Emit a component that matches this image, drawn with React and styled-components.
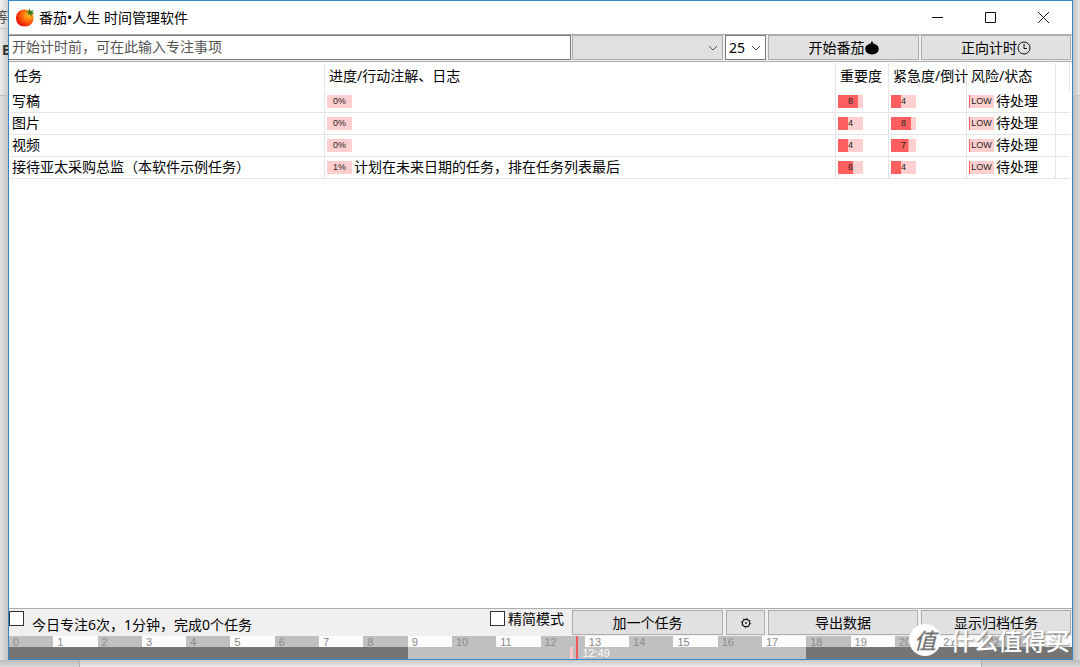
import React from "react";
import styled, { createGlobalStyle } from "styled-components";

const GlobalStyle = createGlobalStyle`
  * { box-sizing: border-box; }
  html, body, #root { height: 100%; }
  body {
    margin: 0;
    overflow: hidden;
    background: #e6e6e6;
    color: #000;
    font: 14px/20px "Noto Sans", "Noto Sans CJK SC", sans-serif;
  }
  button, input, select { font: inherit; color: inherit; margin: 0; }
`;

const Desktop = styled.div`
  height: 100%;
  display: grid;
  grid-template-columns: 8px minmax(0, 1fr) 7px;
  grid-template-rows: minmax(0, 1fr) 7px;
`;

const LeftStrip = styled.div`
  overflow: hidden;
  background: linear-gradient(to right, #e2e2e2, #c4c4c4);
`;

const BackTab = styled.div`
  height: 29px;
  padding-top: 7px;
  border-bottom: 1px solid #c4c4c4;
  background: linear-gradient(to right, #f2f2f2, #cfcfcf);
  color: #555;
  text-indent: -6px;
  white-space: nowrap;
`;

const BackTools = styled.div`
  height: 67px;
  padding-top: 11px;
  border-bottom: 1px solid #c0c0c0;
  background: linear-gradient(to right, #ececec, #cccccc);
  color: #333;
  font-weight: 700;
  text-indent: 2px;
`;

const RightStrip = styled.div`
  background: linear-gradient(to right, #bcbcbc, #dadada);
`;

const RightTop = styled.div`
  height: 96px;
  border-bottom: 1px solid #c4c4c4;
  background: linear-gradient(to right, #c4c4c4, #e6e6e6);
`;

const BottomStrip = styled.div`
  grid-column: 1 / -1;
  display: grid;
  grid-template-columns: 79px minmax(0, 1fr) 98px;
  background: linear-gradient(#bcbcbc, #d8d8d8);
`;

const BackPage = styled.div`
  grid-column: 2;
  border: solid #b4b4b4;
  border-width: 0 1px;
  background: linear-gradient(#c8c8c8, #eeebea);
`;

const Window = styled.main`
  display: flex;
  flex-direction: column;
  min-width: 0;
  border: 1px solid #2f87d0;
  background: #fff;
`;

const TitleBar = styled.header`
  display: flex;
  align-items: center;
  height: 33px;
  padding: 0 21px 0 6px;
`;

const Title = styled.h1`
  flex: 1;
  margin: 0 0 0 4px;
  font-size: 14px;
  font-weight: 400;
`;

const WindowButtons = styled.div`
  display: flex;
  gap: 37px;
`;

const WindowButton = styled.button`
  display: flex;
  width: 16px;
  height: 16px;
  padding: 0;
  border: 0;
  background: none;
`;

const Toolbar = styled.div`
  display: grid;
  grid-template-columns: minmax(0, 1fr) 151px 41px 151px 150px;
  column-gap: 2px;
  height: 28px;
  padding: 0 1px 1px 0;
  border: solid #adadad;
  border-width: 1px 0;
  background: #f0f0f0;
`;

const FocusInput = styled.input`
  min-width: 0;
  height: 25px;
  margin-right: -1px;
  padding: 0 3px 2px;
  border: 1px solid #7a7a7a;
  border-left-width: 0;
  border-radius: 0;
  outline: 0;
  background: #fff;
  &::placeholder { color: #555; opacity: 1; }
`;

const SelectBox = styled.div`
  display: grid;
  align-items: center;
  height: 25px;
  border: 1px solid ${(p) => (p.$muted ? "#adadad" : "#7a7a7a")};
  background: ${(p) => (p.$muted ? "#e0e0e0" : "#fff")};
  > * { grid-area: 1 / 1; }
  > svg { justify-self: end; margin-right: 4px; pointer-events: none; }
`;

const Select = styled.select`
  width: 100%;
  height: 23px;
  padding: 0 3px;
  border: 0;
  outline: 0;
  appearance: none;
  background: transparent;
`;

const Button = styled.button`
  display: flex;
  align-items: center;
  justify-content: center;
  height: 25px;
  min-width: 0;
  padding: 0;
  border: 1px solid #adadad;
  background: #e1e1e1;
  white-space: nowrap;
`;

const ListArea = styled.section`
  flex: 1;
  min-height: 0;
  padding: 1px 2px 0 1px;
`;

const Table = styled.table`
  width: 100%;
  border-collapse: separate;
  border-spacing: 0;
  table-layout: fixed;
`;

const Col = styled.col`
  width: ${(p) => (p.$width ? `${p.$width}px` : "auto")};
`;

const Th = styled.th`
  height: 28px;
  padding: 0 0 3px 4px;
  border-right: 1px solid #e5e5e5;
  font-weight: 400;
  text-align: left;
  white-space: nowrap;
`;

const Td = styled.td`
  height: 22px;
  padding: 0 0 1px 2px;
  border: solid #e5e5e5;
  border-width: 0 1px 1px 0;
  white-space: nowrap;
  &:last-child { border-right: 0; }
`;

const Cell = styled.div`
  display: flex;
  align-items: center;
  gap: 2px;
  height: 20px;
`;

const Meter = styled.span`
  width: 25px;
  height: 13px;
  background: linear-gradient(#ff5f5f, #ff5f5f) 0 0 / ${(p) => p.$fill}% 100% no-repeat #ffcfcf;
  color: #222;
  font: 9px/13px "Liberation Sans", Arial, sans-serif;
  text-align: center;
`;

const Footer = styled.footer`
  display: grid;
  grid-template-columns: minmax(0, 1fr) 79px 151px 39px 150px 150px;
  column-gap: 3px;
  height: 28px;
  padding: 1px 1px 0 0;
  border-top: 1px solid #adadad;
  background: #f0f0f0;
`;

const CheckLabel = styled.label`
  display: flex;
  align-items: ${(p) => (p.$low ? "flex-end" : "flex-start")};
  gap: ${(p) => (p.$low ? 8 : 3)}px;
  padding-bottom: 2px;
  white-space: nowrap;
  line-height: 18px;
`;

const Check = styled.input`
  appearance: none;
  align-self: flex-start;
  width: 15px;
  height: 15px;
  margin: 1px 0 0;
  border: 1px solid #333;
  background: #fff;
`;

const Timeline = styled.section`
  position: relative;
  color: #8a8a8a;
  font: 11px/11px "Liberation Sans", Arial, sans-serif;
`;

const Hours = styled.div`
  display: grid;
  grid-template-columns: repeat(24, minmax(0, 1fr));
  height: 11px;
`;

const Hour = styled.span`
  padding: 1px 0 0 4px;
  overflow: hidden;
  background: ${(p) => (p.$odd ? "#fcfcfc" : "#c0c0c0")};
`;

const Band = styled.div`
  display: grid;
  grid-template-columns: 9fr 9fr 6fr;
  height: 12px;
  background: #757575;
`;

const WorkHours = styled.div`
  grid-column: 2;
  background: #c0c0c0;
`;

const Session = styled.span`
  position: absolute;
  left: calc(53% - 2px);
  bottom: 0;
  width: 3px;
  height: 12px;
  background: #ffc8c8;
`;

const Now = styled.time`
  position: absolute;
  left: calc(53% + 4px);
  bottom: 0;
  height: 23px;
  padding: 12px 0 0 4px;
  border-left: 2px solid #f25a5a;
  color: #fff;
`;

const Watermark = styled.div`
  position: absolute;
  right: 10px;
  bottom: 11px;
  display: flex;
  align-items: center;
  gap: 9px;
  color: #fff;
  font: 500 24px/32px "Noto Sans CJK SC", sans-serif;
  text-shadow: 1px 1px 2px #777;
  pointer-events: none;
`;

const Seal = styled.span`
  width: 32px;
  height: 32px;
  border-radius: 50%;
  background: #fff;
  color: #777;
  font-size: 22px;
  line-height: 30px;
  text-align: center;
  text-shadow: none;
  > i { display: block; }
`;

const Chevron = () => (
  <svg width="10" height="8" viewBox="0 0 10 8" fill="none" stroke="#555">
    <path d="M1 2l4 4 4-4" />
  </svg>
);

const Tomato = () => (
  <svg width="20" height="20" viewBox="0 0 20 20" aria-hidden="true">
    <defs>
      <radialGradient id="skin" cx="0.72" cy="0.32" r="0.75">
        <stop offset="0" stopColor="#ffc21a" />
        <stop offset="0.5" stopColor="#ff6a10" />
        <stop offset="1" stopColor="#f01208" />
      </radialGradient>
    </defs>
    <path d="M9.500 1.500C4.500 1.500 1 5 1 10c0 5 3.600 8.500 8.700 8.500S18.500 15 18.500 10C18.500 5 14.800 1.500 9.500 1.500z" fill="url(#skin)" />
    <path d="M10.500 3l3.200.4.600-2.900 1.400 2.500 3.300-.8-1.700 2.100 1.900 2-2.600-.5.200 2.700-2-2.200-2.100 1.200.7-2.400z" fill="#3f7a1c" />
  </svg>
);

const BlackTomato = () => (
  <svg width="14" height="14" viewBox="0 0 14 14" aria-hidden="true">
    <path d="M7 4.200C8.500 3 13.700 3 13.700 8c0 3.400-2.900 5.400-6.700 5.400S.3 11.400.3 8C.3 3 5.500 3 7 4.200z" />
    <path d="M2.800 3l3-.4L6.400.4h1.300l.2 2.200 3.300.4-2.500 1L7 5.200 5.500 4z" />
  </svg>
);

const Clock = () => (
  <svg width="14" height="14" viewBox="0 0 14 14" fill="none" stroke="#111" aria-hidden="true">
    <circle cx="7" cy="7" r="6" />
    <path d="M7 3v4.500h3" />
  </svg>
);

const Gear = () => (
  <svg width="12" height="12" viewBox="0 0 12 12" fill="none" stroke="#111" aria-hidden="true">
    <circle cx="6" cy="6" r="3.700" strokeWidth="1.200" />
    <circle cx="6" cy="6" r="4.700" strokeDasharray="1 2.690" />
    <circle cx="6" cy="6" r="0.900" fill="#111" stroke="none" />
  </svg>
);

const tasks = [
  { name: "写稿", progress: 0, note: "", importance: 8, urgency: 4 },
  { name: "图片", progress: 0, note: "", importance: 4, urgency: 8 },
  { name: "视频", progress: 0, note: "", importance: 4, urgency: 7 },
  { name: "接待亚太采购总监（本软件示例任务）", progress: 1, note: "计划在未来日期的任务，排在任务列表最后", importance: 6, urgency: 4 },
];

const hours = Array.from({ length: 24 }, (_, i) => i);

export default function App() {
  return (
    <>
      <GlobalStyle />
      <Desktop>
        <LeftStrip aria-hidden="true">
          <BackTab>等</BackTab>
          <BackTools>B</BackTools>
        </LeftStrip>
        <Window>
          <TitleBar>
            <Tomato />
            <Title>番茄•人生 时间管理软件</Title>
            <WindowButtons>
              <WindowButton aria-label="最小化">
                <svg width="16" height="16" stroke="#111"><path d="M3 7.500h11" /></svg>
              </WindowButton>
              <WindowButton aria-label="最大化">
                <svg width="16" height="16" fill="none" stroke="#111"><path d="M3.500 2.500h10v10h-10z" /></svg>
              </WindowButton>
              <WindowButton aria-label="关闭">
                <svg width="16" height="16" stroke="#111"><path d="M3 2l11 11M14 2L3 13" /></svg>
              </WindowButton>
            </WindowButtons>
          </TitleBar>
          <Toolbar>
            <FocusInput aria-label="专注事项" placeholder="开始计时前，可在此输入专注事项" />
            <SelectBox $muted>
              <Select aria-label="任务" />
              <Chevron />
            </SelectBox>
            <SelectBox>
              <Select aria-label="分钟" defaultValue="25">
                <option>25</option>
              </Select>
              <Chevron />
            </SelectBox>
            <Button>开始番茄<BlackTomato /></Button>
            <Button>正向计时<Clock /></Button>
          </Toolbar>
          <ListArea>
            <Table>
              <colgroup>
                <Col $width={315} />
                <Col />
                <Col $width={53} />
                <Col $width={78} />
                <Col $width={89} />
                <Col $width={14} />
              </colgroup>
              <thead>
                <tr>
                  <Th>任务</Th>
                  <Th>进度/行动注解、日志</Th>
                  <Th>重要度</Th>
                  <Th>紧急度/倒计</Th>
                  <Th>风险/状态</Th>
                  <Th />
                </tr>
              </thead>
              <tbody>
                {tasks.map((t) => (
                  <tr key={t.name}>
                    <Td>{t.name}</Td>
                    <Td><Cell><Meter $fill={0}>{t.progress}%</Meter>{t.note}</Cell></Td>
                    <Td><Cell><Meter $fill={t.importance * 10}>{t.importance}</Meter></Cell></Td>
                    <Td><Cell><Meter $fill={t.urgency * 10}>{t.urgency}</Meter></Cell></Td>
                    <Td><Cell><Meter $fill={4}>LOW</Meter>待处理</Cell></Td>
                    <Td />
                  </tr>
                ))}
              </tbody>
            </Table>
          </ListArea>
          <Footer>
            <CheckLabel $low><Check type="checkbox" />今日专注6次，1分钟，完成0个任务</CheckLabel>
            <CheckLabel><Check type="checkbox" />精简模式</CheckLabel>
            <Button>加一个任务</Button>
            <Button aria-label="设置"><Gear /></Button>
            <Button>导出数据</Button>
            <Button>显示归档任务</Button>
          </Footer>
          <Timeline>
            <Hours>{hours.map((h) => <Hour key={h} $odd={h % 2 === 1}>{h}</Hour>)}</Hours>
            <Band><WorkHours /></Band>
            <Session />
            <Now>12:49</Now>
          </Timeline>
        </Window>
        <RightStrip><RightTop /></RightStrip>
        <BottomStrip><BackPage /></BottomStrip>
      </Desktop>
      <Watermark><Seal><i>值</i></Seal>什么值得买</Watermark>
    </>
  );
}
